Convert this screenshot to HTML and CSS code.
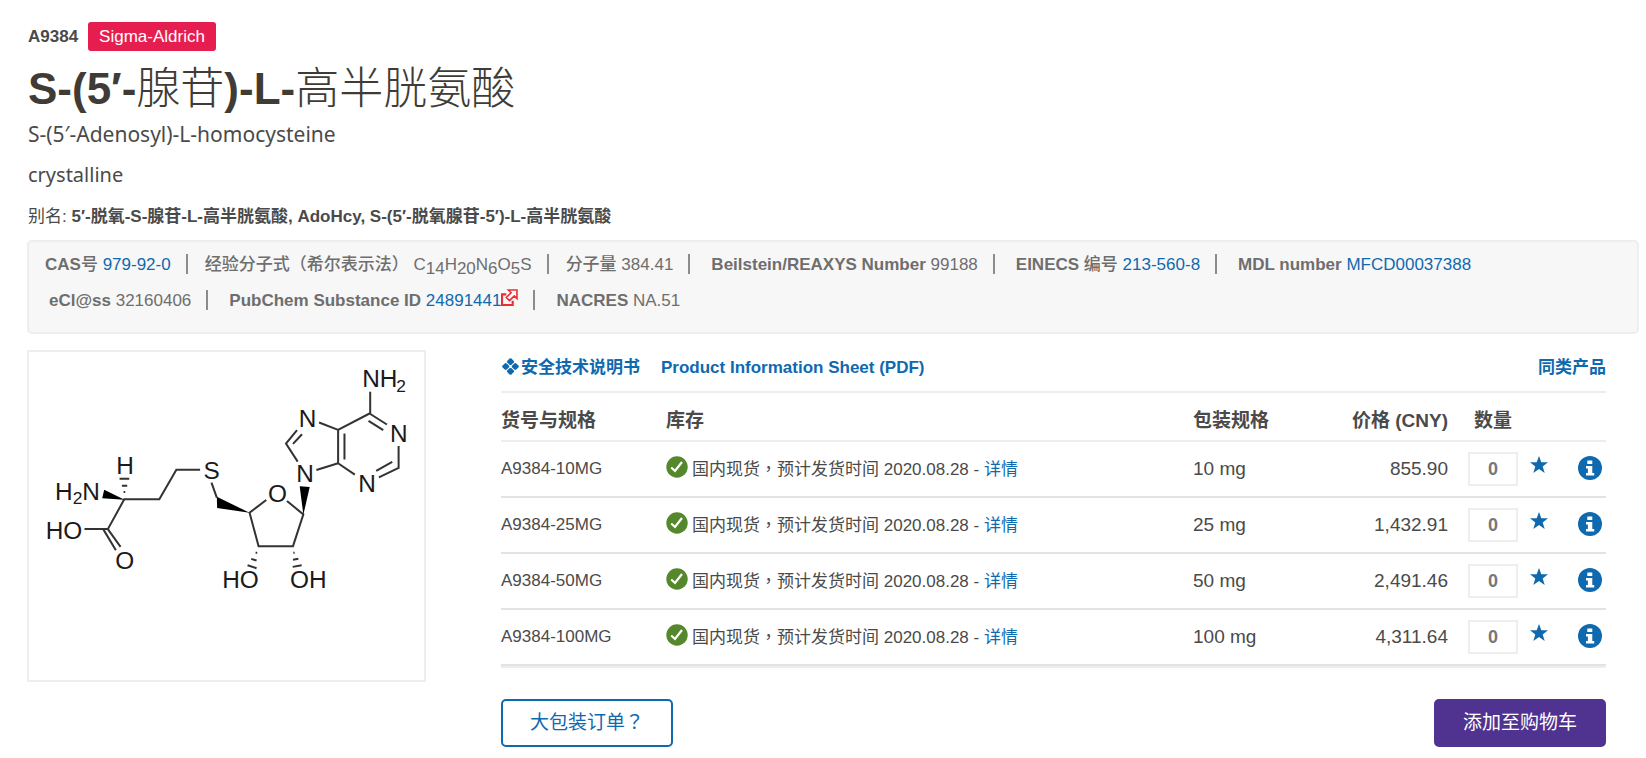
FILE: index.html
```html
<!DOCTYPE html>
<html lang="zh-CN">
<head>
<meta charset="utf-8">
<title>S-(5′-腺苷)-L-高半胱氨酸 | Sigma-Aldrich</title>
<link rel="stylesheet" href="styles.css">
</head>
<body>
<svg class="sprite" aria-hidden="true">
  <symbol id="check" viewBox="0 0 22 22"><circle cx="11" cy="11" r="10.7" fill="#54882b"/><path d="M5.200 11.500 9 15 16 6" fill="none" stroke="#fff" stroke-width="2.200"/></symbol>
  <symbol id="star" viewBox="0 0 18 18"><path d="M9 0l2.300 6.300H18l-5.300 4.100 2 6.600L9 13.100 3.300 17l2-6.600L0 6.300h6.700z" fill="#0f69af"/></symbol>
  <symbol id="info" viewBox="0 0 24 24"><circle cx="12" cy="12" r="12" fill="#0f69af"/><path d="M9.300 4.600h5v3.400h-5zM8 10h6.300v7h1.900v2.400H8V17h1.900v-4.600H8z" fill="#fff"/></symbol>
</svg>
<header class="head">
  <div class="brandline"><span class="sku">A9384</span><a class="brand" href="#">Sigma-Aldrich</a></div>
  <h1 class="title">S-(5′-<span class="cjk">腺苷</span>)-L-<span class="cjk">高半胱氨酸</span></h1>
  <p class="subtitle">S-(5′-Adenosyl)-L-homocysteine</p>
  <p class="subtitle form">crystalline</p>
  <p class="alias">别名: <strong>5′-脱氧-S-腺苷-L-高半胱氨酸, AdoHcy, S-(5′-脱氧腺苷-5′)-L-高半胱氨酸</strong></p>
</header>
<section class="facts">
  <ul class="factrow">
    <li><span><b>CAS<span class="mid">号</span></b> <a href="#">979-92-0</a></span></li>
    <li class="near"><span><b class="mid">经验分子式（希尔表示法）</b> C<sub>14</sub>H<sub>20</sub>N<sub>6</sub>O<sub>5</sub>S</span></li>
    <li class="near"><span><b class="mid">分子量</b> 384.41</span></li>
    <li><span><b>Beilstein/REAXYS Number</b> 99188</span></li>
    <li><span><b>EINECS <span class="mid">编号</span></b> <a href="#">213-560-8</a></span></li>
    <li><span><b>MDL number</b> <a href="#">MFCD00037388</a></span></li>
  </ul>
  <ul class="factrow second">
    <li><span><b>eCl@ss</b> 32160406</span></li>
    <li><span><b>PubChem Substance ID</b> <a href="#">24891441<svg class="ext" viewBox="0 0 16 16"><path d="M5 5H1v10h10v-4" fill="none" stroke="#ee2b33" stroke-width="2"/><path d="M7 1h8v8l-2.500-2.500L8 11 5 8l4.500-4.500z" fill="#fff" stroke="#ee2b33" stroke-width="1.500"/></svg></a></span></li>
    <li><span><b>NACRES</b> NA.51</span></li>
  </ul>
</section>
<main class="product">
  <figure class="structure">
    <svg viewBox="30 21 1182 981" role="img" aria-label="S-(5′-Adenosyl)-L-homocysteine structure">
      <g class="bond">
        <path d="M1051 140V205M1049 205 1101 238M1046 227 1090 255M1136 302V368L1077 396M1117 350 1069 377M1005 388 955 354V254L1049 205M974 343V265M955 254 898 232M847 267 820 296M832 255 799 295 834 349M955 354 890 374"/>
        <path d="M802 467 851 507 820 602H717L690 502 740 464M576 412 592 457M542 373H471L420 462H315L266 551 304 604M252 551 290 614M266 551H196"/>
        <path d="M301 400H330M308 421H324M313 440H318M708 622H713M695 640 711 645M684 659 711 668M821 622H825M820 643 836 640M819 664 846 659"/>
      </g>
      <path d="M592 454 690 502 593 488zM840 423 870 425 851 508zM255 433 316 463 249 459z"/>
      <g class="atom">
        <text x="1027" y="127">NH</text><text class="sub" x="1129" y="141">2</text>
        <text x="837" y="246">N</text><text x="1110" y="290">N</text><text x="1015" y="441">N</text><text x="830" y="411">N</text>
        <text x="745" y="469">O</text><text x="552" y="402">S</text><text x="291" y="386">H</text>
        <text x="108" y="463">H</text><text class="sub" x="161" y="477">2</text><text x="189" y="463">N</text>
        <text x="80" y="580">HO</text><text x="288" y="671">O</text><text x="608" y="727">HO</text><text x="811" y="727">OH</text>
      </g>
    </svg>
  </figure>
  <div class="order">
    <nav class="docs">
      <a href="#"><svg class="gem" viewBox="0 0 16 16"><path d="M8 1.500l2 2L8 5.500 6 3.500zM8 10.500l2 2-2 2-2-2zM3.500 6l2 2-2 2-2-2zM12.500 6l2 2-2 2-2-2z" fill="#0f69af" stroke="#0f69af" stroke-width="2.600" stroke-linejoin="round"/></svg>安全技术说明书</a>
      <a href="#">Product Information Sheet (PDF)</a>
      <a class="similar" href="#">同类产品</a>
    </nav>
    <table class="skus">
      <colgroup><col class="c-sku"><col><col class="c-pack"><col class="c-price"><col class="c-qty"><col class="c-act"></colgroup>
      <thead><tr><th>货号与规格</th><th>库存</th><th>包装规格</th><th class="price">价格 (CNY)</th><th class="qty">数量</th><th></th></tr></thead>
      <tbody>
        <tr><td>A9384-10MG</td><td><svg class="check"><use href="#check"/></svg>国内现货<span class="punct" lang="zh-Hant">，</span>预计发货时间 2020.08.28 - <a href="#">详情</a></td><td class="big">10 mg</td><td class="big price">855.90</td><td class="qty"><input type="text" value="0" aria-label="数量 A9384-10MG"></td><td><div class="acts"><button class="icon" aria-label="收藏"><svg class="star"><use href="#star"/></svg></button><button class="icon" aria-label="信息"><svg class="info"><use href="#info"/></svg></button></div></td></tr>
        <tr><td>A9384-25MG</td><td><svg class="check"><use href="#check"/></svg>国内现货<span class="punct" lang="zh-Hant">，</span>预计发货时间 2020.08.28 - <a href="#">详情</a></td><td class="big">25 mg</td><td class="big price">1,432.91</td><td class="qty"><input type="text" value="0" aria-label="数量 A9384-25MG"></td><td><div class="acts"><button class="icon" aria-label="收藏"><svg class="star"><use href="#star"/></svg></button><button class="icon" aria-label="信息"><svg class="info"><use href="#info"/></svg></button></div></td></tr>
        <tr><td>A9384-50MG</td><td><svg class="check"><use href="#check"/></svg>国内现货<span class="punct" lang="zh-Hant">，</span>预计发货时间 2020.08.28 - <a href="#">详情</a></td><td class="big">50 mg</td><td class="big price">2,491.46</td><td class="qty"><input type="text" value="0" aria-label="数量 A9384-50MG"></td><td><div class="acts"><button class="icon" aria-label="收藏"><svg class="star"><use href="#star"/></svg></button><button class="icon" aria-label="信息"><svg class="info"><use href="#info"/></svg></button></div></td></tr>
        <tr><td>A9384-100MG</td><td><svg class="check"><use href="#check"/></svg>国内现货<span class="punct" lang="zh-Hant">，</span>预计发货时间 2020.08.28 - <a href="#">详情</a></td><td class="big">100 mg</td><td class="big price">4,311.64</td><td class="qty"><input type="text" value="0" aria-label="数量 A9384-100MG"></td><td><div class="acts"><button class="icon" aria-label="收藏"><svg class="star"><use href="#star"/></svg></button><button class="icon" aria-label="信息"><svg class="info"><use href="#info"/></svg></button></div></td></tr>
      </tbody>
    </table>
    <div class="buttons"><button class="btn bulk">大包装订单<span class="punct" lang="zh-Hant">？</span></button><button class="btn cart">添加至购物车</button></div>
  </div>
</main>
</body>
</html>
```
FILE: styles.css
```css
* { box-sizing: border-box; }
body {
  margin: 0;
  padding: 22px 7px 10px 27px;
  background: #fff;
  color: #4a4a4a;
  font: 17px/24px "Liberation Sans", "Noto Sans CJK SC", sans-serif;
}
a { color: #0f69af; text-decoration: none; }
h1, p, ul, figure { margin: 0; padding: 0; }
.sprite { display: none; }
.punct { font-family: "Noto Sans CJK TC", sans-serif; line-height: 1; }

.head { padding-left: 1px; }
.brandline { display: flex; align-items: center; gap: 10px; height: 29px; }
.sku { font-weight: bold; }
.brand { background: #e61e50; color: #fff; border-radius: 3px; padding: 0 11px; line-height: 29px; }
.title { margin-top: 10px; color: #403c35; font-size: 44px; line-height: 56px; }
.cjk { font-weight: 300; }
.subtitle { margin-top: 3px; font: 21px/28px "Noto Sans", "Noto Sans CJK SC", sans-serif; }
.form { margin-top: 13px; font-size: 20px; }
.alias { margin-top: 16px; line-height: 24px; }

.facts {
  margin-top: 11px;
  min-height: 94px;
  padding: 5px 16px;
  background: #f7f7f7;
  border: 2px solid #eee;
  border-radius: 5px;
  color: #6e6e6e;
}
.factrow { display: flex; flex-wrap: wrap; list-style: none; line-height: 36px; }
.factrow li { display: flex; height: 36px; white-space: nowrap; }
.factrow li + li::before {
  content: "";
  width: 2px;
  height: 20px;
  margin: 7px 21px 0 15px;
  background: #8c8c8c;
}
.factrow li.near::before { margin-right: 17px; }
.factrow.second { padding-left: 4px; }
.factrow sub { line-height: 0; font-size: 17px; }
.mid { font-weight: 500; }
.ext { width: 17px; height: 17px; }

.product {
  display: grid;
  grid-template-columns: 399px minmax(0, 1fr);
  gap: 75px;
  align-items: start;
  margin: 16px 33px 0 0;
}
.structure { border: 2px solid #eee; }
.structure svg { display: block; width: 100%; }
.bond { fill: none; stroke: #333; stroke-width: 6; }
.atom { font-size: 73px; fill: #1a1a1a; }
.atom .sub { font-size: 52px; }

.docs { display: flex; gap: 21px; align-items: center; height: 43px; padding-bottom: 6px; border-bottom: 2px solid #eee; font-weight: bold; }
.gem { width: 17px; height: 17px; margin: 0 2px 0 1px; vertical-align: -2px; }
.similar { margin-left: auto; }
.skus { width: 100%; border-collapse: separate; border-spacing: 0; table-layout: fixed; border-bottom: 2px solid #eee; }
.c-sku { width: 165px; }
.c-pack { width: 120px; }
.c-price { width: 135px; }
.c-qty { width: 70px; }
.c-act { width: 88px; }
th, td { padding: 0; text-align: left; white-space: nowrap; }
th { height: 49px; padding-top: 8px; border-bottom: 2px solid #eee; font-size: 19px; }
td { height: 56px; border-bottom: 2px solid #e3e3e3; }
.big { font-size: 19px; }
.price { text-align: right; }
.qty { padding-left: 20px; text-align: center; }
.qty input {
  display: block;
  width: 50px;
  height: 34px;
  border: 2px solid #eee;
  padding: 0;
  color: #777;
  font: bold 18px "Liberation Sans", sans-serif;
  text-align: center;
}
.check { width: 22px; height: 22px; margin-right: 4px; vertical-align: -3px; }
.acts { display: flex; justify-content: space-between; padding: 0 4px 3px 12px; }
.icon { display: flex; padding: 0; border: 0; background: none; }
.star { width: 18px; height: 18px; }
.info { width: 24px; height: 24px; }

.buttons { display: flex; justify-content: space-between; margin-top: 31px; }
.btn {
  min-width: 172px;
  height: 48px;
  padding-bottom: 6px;
  border: 2px solid #0f69af;
  border-radius: 5px;
  background: #fff;
  color: #0f69af;
  font: 19px "Liberation Sans", "Noto Sans CJK SC", sans-serif;
}
.cart { border-color: #503291; background: #503291; color: #fff; }
```
